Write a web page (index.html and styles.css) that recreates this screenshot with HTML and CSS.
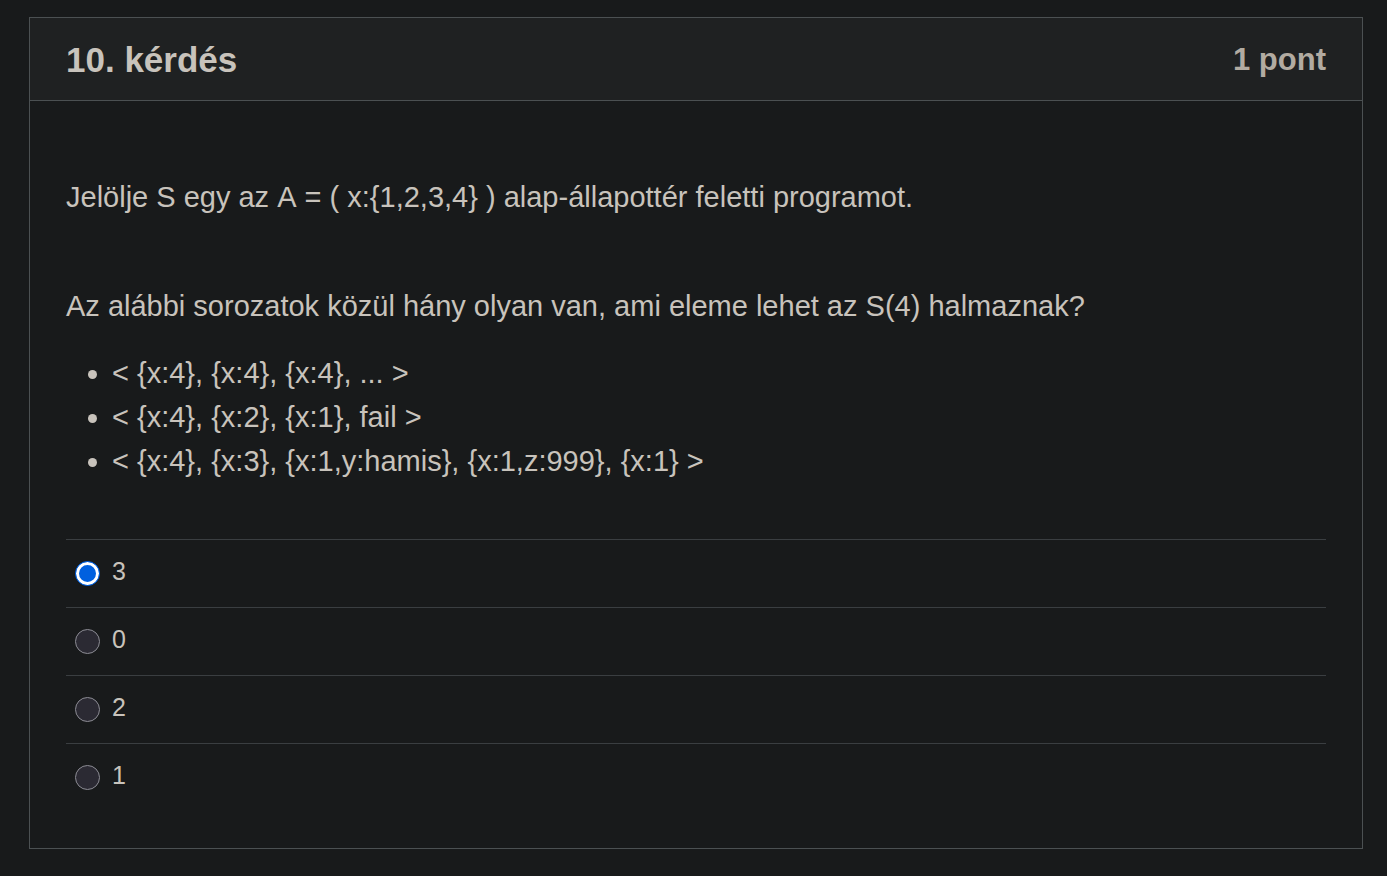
FILE: index.html
```html
<!DOCTYPE html>
<html lang="hu">
<head>
<meta charset="utf-8">
<title>10. kérdés</title>
<link rel="stylesheet" href="styles.css">
</head>
<body>
<main class="question">
  <header class="question-header">
    <h1 class="question-title">10. kérdés</h1>
    <span class="question-points">1 pont</span>
  </header>
  <div class="question-body">
    <p class="statement">Jelölje S egy az A = ( x:{1,2,3,4} ) alap-állapottér feletti programot.</p>
    <p class="prompt">Az alábbi sorozatok közül hány olyan van, ami eleme lehet az S(4) halmaznak?</p>
    <ul class="sequences">
      <li>&lt; {x:4}, {x:4}, {x:4}, ... &gt;</li>
      <li>&lt; {x:4}, {x:2}, {x:1}, fail &gt;</li>
      <li>&lt; {x:4}, {x:3}, {x:1,y:hamis}, {x:1,z:999}, {x:1} &gt;</li>
    </ul>
    <form class="answers">
      <label class="answer"><input class="radio" type="radio" name="answer" value="3" checked><span>3</span></label>
      <label class="answer"><input class="radio" type="radio" name="answer" value="0"><span>0</span></label>
      <label class="answer"><input class="radio" type="radio" name="answer" value="2"><span>2</span></label>
      <label class="answer"><input class="radio" type="radio" name="answer" value="1"><span>1</span></label>
    </form>
  </div>
</main>
</body>
</html>
```
FILE: styles.css
```css
* { box-sizing: border-box; }
body {
  margin: 0;
  padding: 17px 24px 27px 29px;
  background: #181a1b;
  color: #c8c3bc;
  font-family: "Liberation Sans", Arial, sans-serif;
  font-size: 29px;
  font-kerning: none;
  line-height: 44px;
}
.question { border: 1px solid #4b5052; }
.question-header {
  display: flex;
  align-items: center;
  justify-content: space-between;
  padding: 20px 36px 18px;
  background: #1f2122;
  border-bottom: 1px solid #4b5052;
}
.question-title { margin: 0; font-size: 35px; font-weight: bold; }
.question-points { color: #b2aba1; font-size: 31px; font-weight: bold; }
.question-body { padding: 74px 36px 37px; }
.statement { margin: 0 0 65px; }
.prompt { margin: 0 0 23px; }
.sequences { margin: 0 0 56px; padding: 0 0 0 46px; }
.answers { margin: 0; font-size: 25px; line-height: 29px; }
.answer {
  display: flex;
  align-items: flex-start;
  gap: 12px;
  padding: 17px 9px 21px;
  border-top: 1px solid #3a3e41;
}
.radio {
  appearance: none;
  flex: none;
  width: 25px;
  height: 25px;
  margin: 4px 0 0;
  border: 1px solid #8c8c94;
  border-radius: 50%;
  background: #2b2a33;
}
.radio:checked {
  border-color: #0060df;
  background: #0060df;
  box-shadow: inset 0 0 0 3px #fff;
}
```
